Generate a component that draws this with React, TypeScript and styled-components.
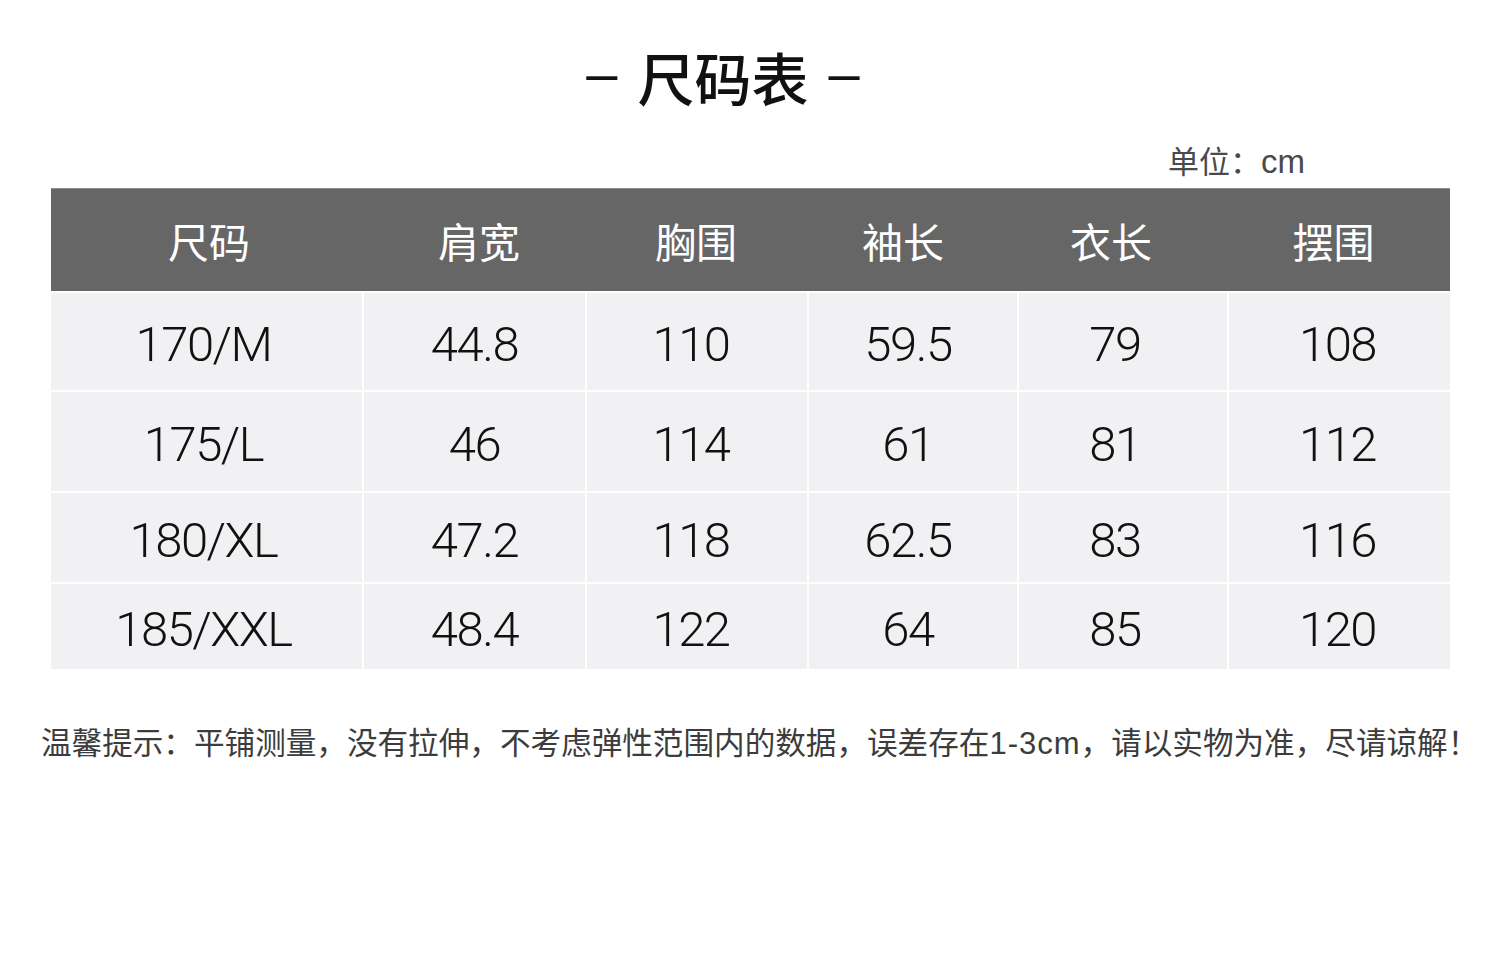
import React from 'react';
import styled, { createGlobalStyle } from 'styled-components';

const GlobalStyle = createGlobalStyle`
  html, body {
    margin: 0;
    padding: 0;
    background: #ffffff;
  }
  body {
    font-family: 'Liberation Sans', 'Noto Sans CJK SC', sans-serif;
  }
`;

const CJK = `'Noto Sans CJK SC', 'Liberation Sans', sans-serif`;
const LATIN = `'Liberation Sans', 'Noto Sans CJK SC', sans-serif`;

const Page = styled.div`
  width: 1500px;
  height: 960px;
  box-sizing: border-box;
  padding-top: 40px;
`;

const Title = styled.h1`
  margin: 0;
  display: flex;
  justify-content: center;
  align-items: center;
  gap: 20px;
  padding-right: 54px;
  height: 72px;
  font-family: ${CJK};
  font-size: 57px;
  font-weight: 500;
  color: #111111;
`;

const Dash = styled.span`
  font-family: ${LATIN};
  font-weight: 400;
  font-size: 56px;
  line-height: 1;
  margin-top: -6px;
`;

const Unit = styled.div`
  margin-top: 26px;
  height: 50px;
  text-align: right;
  padding-right: 195px;
  font-family: ${CJK};
  font-size: 31px;
  color: #4a4a4a;
  line-height: 44px;

  & > span {
    font-family: ${LATIN};
    font-size: 33px;
  }
`;

const Table = styled.div`
  margin-left: 51px;
  width: 1399px;
  display: flex;
  flex-direction: column;
  gap: 2px;
`;

const HeaderRow = styled.div`
  display: grid;
  grid-template-columns: 316px 224px 210px 204px 212px 233px;
  height: 103px;
  background: #666666;
  border-top: 1px solid #8a8a8a;
  box-sizing: border-box;
`;

const HeaderCell = styled.div`
  display: flex;
  align-items: center;
  justify-content: center;
  font-family: ${CJK};
  font-size: 41px;
  font-weight: 400;
  color: #ffffff;
`;

const BodyRow = styled.div<{ $h: number }>`
  display: grid;
  grid-template-columns: 311px 221px 220px 208px 208px 221px;
  column-gap: 2px;
  height: ${p => p.$h}px;
`;

const Cell = styled.div<{ $shift: number }>`
  display: flex;
  align-items: center;
  justify-content: center;
  padding-top: 6px;
  padding-right: ${p => p.$shift * 2}px;
  background: #f1f1f3;
  font-family: Roboto, 'Liberation Sans', sans-serif;
  font-weight: 300;
  font-size: 49px;
  letter-spacing: -1.5px;
  color: #111111;
`;

const Note = styled.p`
  margin: 50px 0 0 41px;
  font-family: ${CJK};
  font-size: 30.6px;
  color: #3c3c3c;
  white-space: nowrap;

  & > span {
    font-family: ${LATIN};
    font-size: 31px;
    letter-spacing: 1px;
  }
`;

const headers = ['尺码', '肩宽', '胸围', '袖长', '衣长', '摆围'];

// the text in the image sits a little left of each cell's centre
const shifts = [3, 0, 6, 5, 8, 2];

const rows: { h: number; cells: string[] }[] = [
  { h: 97, cells: ['170/M', '44.8', '110', '59.5', '79', '108'] },
  { h: 99, cells: ['175/L', '46', '114', '61', '81', '112'] },
  { h: 89, cells: ['180/XL', '47.2', '118', '62.5', '83', '116'] },
  { h: 85, cells: ['185/XXL', '48.4', '122', '64', '85', '120'] },
];

export default function App() {
  return (
    <>
      <GlobalStyle />
      <Page>
        <Title>
          <Dash>–</Dash>
          尺码表
          <Dash>–</Dash>
        </Title>
        <Unit>
          单位：<span>cm</span>
        </Unit>
        <Table>
          <HeaderRow>
            {headers.map(h => (
              <HeaderCell key={h}>{h}</HeaderCell>
            ))}
          </HeaderRow>
          {rows.map(row => (
            <BodyRow key={row.cells[0]} $h={row.h}>
              {row.cells.map((c, i) => (
                <Cell key={i} $shift={shifts[i]}>
                  {c}
                </Cell>
              ))}
            </BodyRow>
          ))}
        </Table>
        <Note>
          温馨提示：平铺测量，没有拉伸，不考虑弹性范围内的数据，误差存在<span>1-3cm</span>，请以实物为准，尽请谅解！
        </Note>
      </Page>
    </>
  );
}
